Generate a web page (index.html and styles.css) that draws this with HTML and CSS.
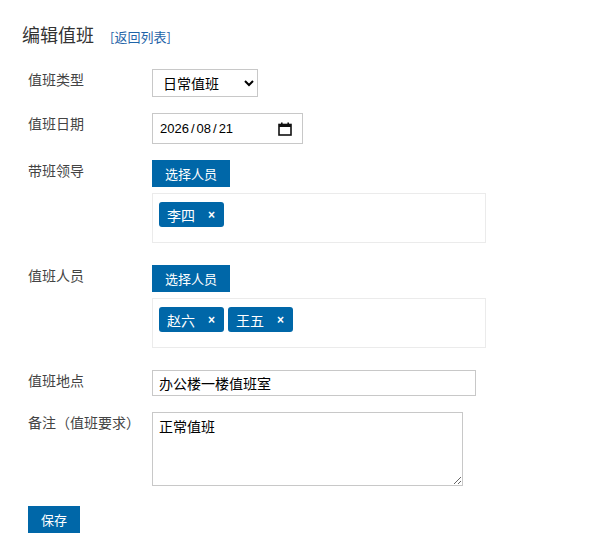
FILE: index.html
```html
<!DOCTYPE html>
<html lang="zh-CN">
<head>
  <meta charset="utf-8">
  <link rel="stylesheet" href="styles.css">
</head>
<body>
  <div class="page">
    <div class="page-head">
      <h1 class="page-title">编辑值班</h1>
      <a class="back-link" href="#">[返回列表]</a>
    </div>

    <form class="duty-form">
      <div class="form-row">
        <label class="form-label">值班类型</label>
        <select class="form-select">
          <option>日常值班</option>
          <option>节假日值班</option>
        </select>
      </div>

      <div class="form-row">
        <label class="form-label">值班日期</label>
        <div class="form-date">
          <span class="date-text">2026<i>/</i>08<i>/</i>21</span>
          <svg class="date-icon" width="14" height="14" viewBox="0 0 14 14">
            <rect x="1" y="2.5" width="12" height="10.5" fill="none" stroke="#111" stroke-width="1.6"/>
            <rect x="1" y="2.5" width="12" height="2.5" fill="#111"/>
            <rect x="3" y="0.5" width="1.6" height="3" fill="#111"/>
            <rect x="9.4" y="0.5" width="1.6" height="3" fill="#111"/>
          </svg>
        </div>
      </div>

      <div class="form-row row-people">
        <label class="form-label">带班领导</label>
        <div class="people">
          <button type="button" class="btn">选择人员</button>
          <div class="people-box">
            <span class="tag">李四<span class="tag-close">×</span></span>
          </div>
        </div>
      </div>

      <div class="form-row row-people">
        <label class="form-label">值班人员</label>
        <div class="people">
          <button type="button" class="btn">选择人员</button>
          <div class="people-box">
            <span class="tag">赵六<span class="tag-close">×</span></span>
            <span class="tag">王五<span class="tag-close">×</span></span>
          </div>
        </div>
      </div>

      <div class="form-row">
        <label class="form-label">值班地点</label>
        <input class="form-input" type="text" value="办公楼一楼值班室">
      </div>

      <div class="form-row row-note">
        <label class="form-label">备注（值班要求）</label>
        <textarea class="form-textarea">正常值班</textarea>
      </div>

      <button type="submit" class="btn btn-save">保存</button>
    </form>
  </div>
</body>
</html>
```

FILE: styles.css
```css
* {
  margin: 0;
  padding: 0;
  box-sizing: border-box;
}

body {
  font-family: "Noto Sans CJK SC", "Liberation Sans", sans-serif;
  font-size: 14px;
  color: #333;
  background: #fff;
}

.page {
  padding: 22px 28px 0 28px;
}

.page-head {
  display: flex;
  align-items: baseline;
  margin-left: -6px;
  margin-bottom: 23px;
}

.page-title {
  font-size: 18px;
  font-weight: normal;
  line-height: 24px;
  color: #333;
}

.back-link {
  margin-left: 16px;
  font-size: 13px;
  color: #1f64a8;
  text-decoration: none;
}

.form-row {
  display: flex;
  align-items: flex-start;
  margin-bottom: 16px;
}

.row-people {
  margin-bottom: 22px;
}

.row-note {
  margin-bottom: 20px;
}

.form-label {
  width: 124px;
  flex-shrink: 0;
  line-height: 20px;
  color: #444;
}

.form-select {
  width: 106px;
  height: 28px;
  padding: 0 6px;
  font-family: inherit;
  font-size: 14px;
  color: #000;
  border: 1px solid #c8c8c8;
  border-radius: 0;
  background: #fff;
}

/* date field: value plus calendar button */
.form-date {
  width: 151px;
  height: 31px;
  padding: 0 10px 0 7px;
  display: flex;
  align-items: center;
  justify-content: space-between;
  border: 1px solid #c8c8c8;
  background: #fff;
}

.date-text {
  font-family: "Liberation Sans", sans-serif;
  font-size: 13px;
  color: #000;
}

.date-text i {
  font-style: normal;
  margin: 0 2px;
}

.date-icon {
  display: block;
}

.form-input {
  width: 324px;
  height: 26px;
  padding: 0 6px;
  font-family: inherit;
  font-size: 14px;
  color: #000;
  border: 1px solid #c8c8c8;
}

.form-textarea {
  width: 311px;
  height: 74px;
  padding: 3px 6px;
  font-family: inherit;
  font-size: 14px;
  line-height: 20px;
  color: #000;
  border: 1px solid #c8c8c8;
}

.people {
  display: flex;
  flex-direction: column;
  gap: 6px;
}

.btn {
  height: 27px;
  padding: 0 13px;
  font-family: inherit;
  font-size: 13px;
  color: #fff;
  background: #0067a8;
  border: none;
  cursor: pointer;
  align-self: flex-start;
}

.people-box {
  width: 334px;
  height: 50px;
  padding: 8px 6px;
  display: flex;
  align-items: flex-start;
  gap: 4px;
  border: 1px solid #ebebeb;
}

.tag {
  display: inline-flex;
  align-items: center;
  height: 25px;
  padding: 0 9px 0 8px;
  font-size: 14px;
  color: #fff;
  background: #0067a8;
  border-radius: 3px;
}

.tag-close {
  margin-left: 13px;
  font-family: "Liberation Sans", sans-serif;
  font-size: 12px;
  font-weight: bold;
}

.btn-save {
  display: block;
  padding: 0 13px;
}
```
